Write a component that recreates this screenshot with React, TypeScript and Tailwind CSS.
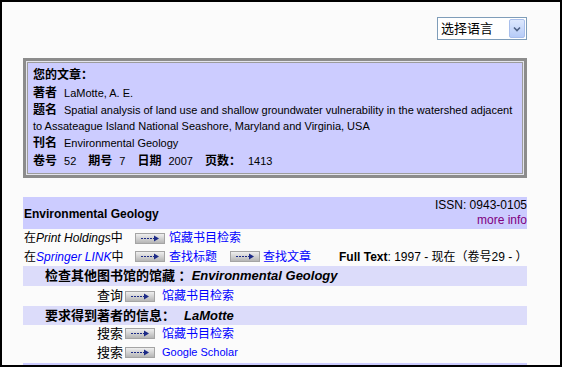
const ArrowBtn = () => (
  <svg width="30" height="11" viewBox="0 0 30 11" className="shrink-0">
    <defs>
      <linearGradient id="btnGrad" x1="0" y1="0" x2="0" y2="1">
        <stop offset="0" stopColor="#f2f2f2" />
        <stop offset="1" stopColor="#b2b2b2" />
      </linearGradient>
    </defs>
    <rect x="0.5" y="0.5" width="29" height="10" fill="url(#btnGrad)" stroke="#a4a4a4" />
    <path d="M6 5.5h13" stroke="#1c2a86" strokeDasharray="2 1" />
    <path d="M19 2.5l5 3-5 3z" fill="#1c2a86" />
  </svg>
);

const Label = ({ children }: { children: React.ReactNode }) => (
  <span className="font-bold text-[12px] mr-[7px]">{children}</span>
);

export default function App() {
  return (
    <div className="w-[562px] h-[367px] border-2 border-black bg-[#fbfbfb] text-black font-['Liberation_Sans','Noto_Sans_CJK_SC',sans-serif] overflow-hidden">
      <div className="w-[504px] ml-[21px] pt-[15px]">
        {/* language select */}
        <div className="flex justify-end">
          <div className="w-[90px] h-[23px] border border-[#7f9db9] bg-white flex items-center justify-between pl-[3px] pr-px">
            <span className="text-[13px] leading-none">选择语言</span>
            <div className="w-[16px] h-[19px] rounded-[2px] bg-gradient-to-b from-[#dde8fd] to-[#b6cbf7] border border-[#a9bfec] flex items-center justify-center">
              <svg width="8" height="6" viewBox="0 0 8 6">
                <path d="M1 1.5l3 3 3-3" stroke="#4d6185" strokeWidth="1.6" fill="none" />
              </svg>
            </div>
          </div>
        </div>

        {/* article box */}
        <div className="mt-[18px] border-[3px] border-[#8c8c8c] bg-[#e4e4ec] p-px">
          <div className="border border-[#9c9c9c] bg-[#ccccff] pl-[5px] pt-[2px] pb-[3px] text-[11px]">
            <div className="h-[19px] flex items-center font-bold text-[12px]">您的文章：</div>
            <div className="h-[18px] flex items-center">
              <Label>著者</Label>LaMotte, A. E.
            </div>
            <div className="leading-[16px]">
              <div className="whitespace-nowrap flex items-center">
                <Label>题名</Label>Spatial analysis of land use and shallow groundwater vulnerability in the watershed adjacent
              </div>
              <div className="whitespace-nowrap">to Assateague Island National Seashore, Maryland and Virginia, USA</div>
            </div>
            <div className="h-[18px] flex items-center">
              <Label>刊名</Label>Environmental Geology
            </div>
            <div className="h-[18px] flex items-center">
              <Label>卷号</Label>
              <span className="mr-[12px]">52</span>
              <Label>期号</Label>
              <span className="mr-[12px]">7</span>
              <Label>日期</Label>
              <span className="mr-[12px]">2007</span>
              <Label>页数：</Label>
              <span>1413</span>
            </div>
          </div>
        </div>

        {/* journal section */}
        <div className="mt-[19px] h-[32px] bg-[#ccccff] flex justify-between items-center pl-[1px]">
          <span className="font-bold text-[12px] mt-[1px]">Environmental Geology</span>
          <div className="text-right text-[12px] leading-[15px]">
            <div>ISSN: 0943-0105</div>
            <div className="text-[#800080]">more info</div>
          </div>
        </div>

        <div className="h-[18px] flex items-center text-[12px] pl-[1px] whitespace-nowrap">
          <span className="w-[111px] shrink-0">
            在<i>Print Holdings</i>中
          </span>
          <ArrowBtn />
          <a className="ml-[4px] text-[#0000ff]">馆藏书目检索</a>
        </div>
        <div className="h-[19px] flex items-center text-[12px] pl-[1px] whitespace-nowrap">
          <span className="w-[111px] shrink-0">
            在<i className="text-[#0000ff]">Springer LINK</i>中
          </span>
          <ArrowBtn />
          <a className="ml-[4px] text-[#0000ff] shrink-0">查找标题</a>
          <span className="ml-[13px] flex shrink-0">
            <ArrowBtn />
          </span>
          <a className="ml-[3px] text-[#0000ff] shrink-0">查找文章</a>
          <span className="ml-[28px] shrink-0">
            <b>Full Text</b>: 1997 - 现在（卷号29 - ）
          </span>
        </div>

        <div className="h-[20px] bg-[#dcdcfa] flex items-center pl-[22px] text-[13px] font-bold whitespace-nowrap">
          检查其他图书馆的馆藏 ：<i>Environmental Geology</i>
        </div>
        <div className="h-[20px] flex items-center text-[13px] whitespace-nowrap">
          <span className="w-[102px] shrink-0 text-right pr-[2px]">查询</span>
          <ArrowBtn />
          <a className="ml-[7px] text-[12px] text-[#0000ff]">馆藏书目检索</a>
        </div>

        <div className="h-[19px] bg-[#dcdcfa] flex items-center pl-[22px] text-[13px] font-bold whitespace-nowrap">
          要求得到著者的信息：<i className="ml-[9px]">LaMotte</i>
        </div>
        <div className="h-[17px] flex items-center text-[13px] whitespace-nowrap">
          <span className="w-[102px] shrink-0 text-right pr-[2px]">搜索</span>
          <ArrowBtn />
          <a className="ml-[7px] text-[12px] text-[#0000ff]">馆藏书目检索</a>
        </div>
        <div className="h-[21px] flex items-center text-[13px] whitespace-nowrap">
          <span className="w-[102px] shrink-0 text-right pr-[2px]">搜索</span>
          <ArrowBtn />
          <a className="ml-[7px] text-[11px] text-[#0000ff]">Google Scholar</a>
        </div>
        <div className="h-[2px] bg-[#ccccff]" />
      </div>
    </div>
  );
}
